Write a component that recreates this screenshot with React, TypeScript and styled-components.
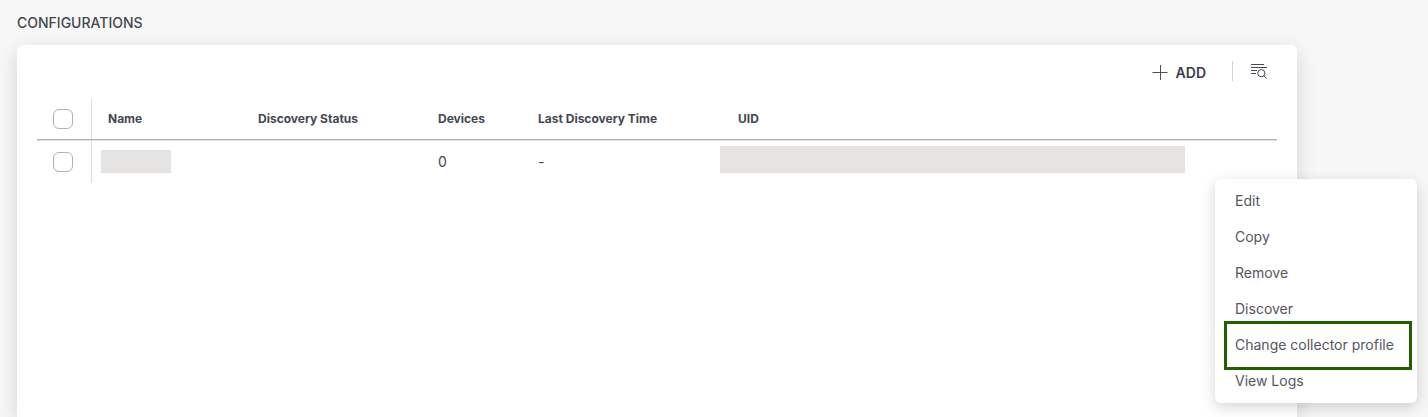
import React from "react";
import styled, { createGlobalStyle } from "styled-components";

const GlobalStyle = createGlobalStyle`
  *, *::before, *::after { box-sizing: border-box; }
  body {
    margin: 0;
    background: #f7f7f7;
    color: #444751;
    font-family: Inter, "Liberation Sans", sans-serif;
    font-size: 14px;
    line-height: 20px;
  }
`;

const Page = styled.main`
  display: flex;
  flex-direction: column;
  min-height: 100vh;
  padding: 13px 131px 0 17px;
  overflow: hidden;
`;

const Title = styled.h1`
  margin: 0 0 12px;
  font-size: 14px;
  line-height: 20px;
  font-weight: 500;
`;

const Card = styled.section`
  position: relative;
  flex: 1;
  padding: 10px 20px 0;
  background: #fff;
  border-radius: 6px 6px 0 0;
  box-shadow: 0 6px 20px rgba(0, 0, 0, 0.15);
`;

const Toolbar = styled.div`
  display: flex;
  align-items: center;
  justify-content: flex-end;
  height: 32px;
  margin-bottom: 12px;
`;

const ToolButton = styled.button`
  display: flex;
  align-items: center;
  gap: 8px;
  padding: 0;
  border: 0;
  background: none;
  color: #3a3c49;
  font: inherit;
  font-weight: 600;
  cursor: pointer;
`;

const AddButton = styled(ToolButton)`
  padding-top: 4px;
`;

const Separator = styled.span`
  width: 1px;
  height: 20px;
  margin: 0 18px 0 26px;
  background: #cfd2d8;
`;

const FilterButton = styled(ToolButton)`
  margin-right: 10px;
`;

const Table = styled.table`
  width: 100%;
  table-layout: fixed;
  border-collapse: separate;
  border-spacing: 0;
  text-align: left;
`;

const HeadCell = styled.th`
  height: 42px;
  padding: 0 16px 2px;
  border-bottom: 1px solid #dfe2e4;
  box-shadow: inset 0 -1px #adb3b8;
  font-size: 12px;
  line-height: 16px;
  font-weight: 700;
  white-space: nowrap;
`;

const Cell = styled.td`
  height: 42px;
  padding: 0 16px;
`;

const MaskedCell = styled(Cell)`
  padding-bottom: 10px;
  vertical-align: bottom;
`;

const CheckSlot = styled.label`
  display: flex;
  align-items: center;
  height: 40px;
  padding-left: 16px;
  border-right: 1px solid #dcdddf;
`;

const HeadCheck = styled(HeadCell)`
  padding: 0;
  vertical-align: top;
`;

const RowCheck = styled(Cell)`
  padding: 0;

  ${CheckSlot} {
    height: 42px;
  }
`;

const Checkbox = styled.input`
  appearance: none;
  width: 20px;
  height: 20px;
  margin: 0;
  border: 1px solid #adb3b8;
  border-radius: 6px;
  background: #fff;
`;

const Masked = styled.span<{ $width: number; $height: number; $outset: number }>`
  display: block;
  width: ${(p) => p.$width}px;
  height: ${(p) => p.$height}px;
  margin-left: -${(p) => p.$outset}px;
  background: #e5e4e2;
`;

const Menu = styled.ul`
  position: absolute;
  top: 134px;
  right: -120px;
  width: 202px;
  margin: 0;
  padding: 4px 0;
  list-style: none;
  background: #fff;
  border-radius: 6px;
  box-shadow: 0 4px 14px rgba(0, 0, 0, 0.17);
`;

const MenuItem = styled.button`
  display: block;
  width: 100%;
  height: 36px;
  padding: 0 0 0 20px;
  border: 0;
  background: none;
  color: #535661;
  font: inherit;
  text-align: left;
  white-space: nowrap;
  cursor: pointer;
`;

const MenuEntry = styled.li<{ $marked?: boolean }>`
  position: relative;

  ${(p) =>
    p.$marked &&
    `&::after {
      content: "";
      position: absolute;
      inset: -6px 5px -7px 9px;
      border: 3px solid #225f00;
      pointer-events: none;
    }`}
`;

const columns = [
  { label: "Name", width: 150 },
  { label: "Discovery Status", width: 180 },
  { label: "Devices", width: 100 },
  { label: "Last Discovery Time", width: 200 },
  { label: "UID" },
];

const actions = ["Edit", "Copy", "Remove", "Discover", "Change collector profile", "View Logs"];

const PlusIcon = () => (
  <svg width="16" height="16" viewBox="0 0 16 16" fill="none" stroke="#4c4e59" aria-hidden="true">
    <path d="M0.5 7.5H15.5M8.5 0V15" />
  </svg>
);

const FilterIcon = () => (
  <svg width="16" height="16" viewBox="0 0 16 16" fill="none" stroke="#464854" aria-hidden="true">
    <path d="M0 1.5H13M0 4.5H16M0 7.5H6M0 10.5H5M12.8 12.8L15.7 15.6" />
    <circle cx="10.3" cy="10.2" r="3.6" />
  </svg>
);

export default function App() {
  return (
    <>
      <GlobalStyle />
      <Page>
        <Title>CONFIGURATIONS</Title>
        <Card>
          <Toolbar>
            <AddButton type="button">
              <PlusIcon />
              ADD
            </AddButton>
            <Separator />
            <FilterButton type="button" aria-label="Filter list">
              <FilterIcon />
            </FilterButton>
          </Toolbar>
          <Table>
            <colgroup>
              <col width={55} />
              {columns.map((c) => (
                <col key={c.label} width={c.width} />
              ))}
            </colgroup>
            <thead>
              <tr>
                <HeadCheck>
                  <CheckSlot>
                    <Checkbox type="checkbox" aria-label="Select all" />
                  </CheckSlot>
                </HeadCheck>
                {columns.map((c) => (
                  <HeadCell key={c.label} scope="col">
                    {c.label}
                  </HeadCell>
                ))}
              </tr>
            </thead>
            <tbody>
              <tr>
                <RowCheck>
                  <CheckSlot>
                    <Checkbox type="checkbox" aria-label="Select row" />
                  </CheckSlot>
                </RowCheck>
                <MaskedCell>
                  <Masked $width={70} $height={23} $outset={7} />
                </MaskedCell>
                <Cell />
                <Cell>0</Cell>
                <Cell>-</Cell>
                <MaskedCell>
                  <Masked $width={465} $height={27} $outset={18} />
                </MaskedCell>
              </tr>
            </tbody>
          </Table>
          <Menu>
            {actions.map((a) => (
              <MenuEntry key={a} $marked={a === "Change collector profile"}>
                <MenuItem type="button">{a}</MenuItem>
              </MenuEntry>
            ))}
          </Menu>
        </Card>
      </Page>
    </>
  );
}
